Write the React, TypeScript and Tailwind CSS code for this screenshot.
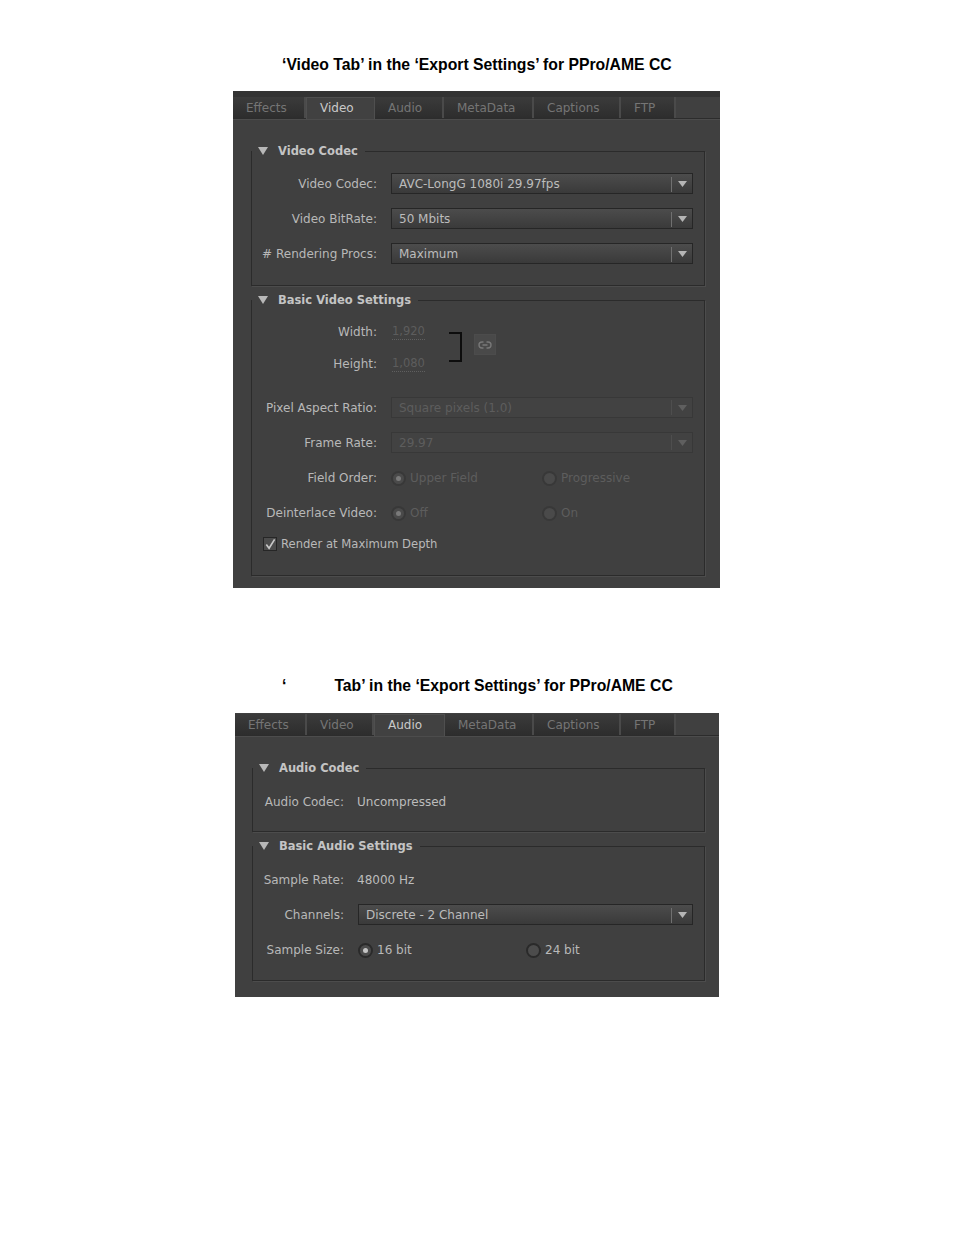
import React from "react";

const FONT = "font-['DejaVu_Sans',sans-serif]";

type Tab = { label: string; width: number };

function Tabs({ tabs, active }: { tabs: Tab[]; active: string }) {
  return (
    <div className="flex h-[22px] items-stretch border-b border-[#2c2c2c] shadow-[0_1px_0_#4c4c4c]">
      {tabs.map((t) => {
        const on = t.label === active;
        return (
          <div
            key={t.label}
            style={{ width: t.width }}
            className={
              on
                ? "flex shrink-0 items-center border-x border-t border-[#4f4f4f] bg-[#414141] pb-[2px] pl-[13px] text-[#c9c9c9] -mb-px"
                : "flex shrink-0 items-center border-r-2 border-[#4a4a4a] bg-gradient-to-b from-[#3b3b3b] to-[#2d2d2d] pl-[13px] text-[#757575]"
            }
          >
            {t.label}
          </div>
        );
      })}
    </div>
  );
}

function Triangle() {
  return (
    <svg width="10" height="8" viewBox="0 0 10 8" className="shrink-0">
      <path d="M0 0H10L5 8Z" fill="#b8b8b8" />
    </svg>
  );
}

function Group({ title, className, children }: { title: string; className: string; children: React.ReactNode }) {
  return (
    <div className={`border border-[#2b2b2b] shadow-[1px_1px_0_#4c4c4c] ${className}`}>
      <div className="-mt-[11px] flex h-[21px] w-fit items-center bg-[#404040] pb-[2px] pl-[6px] pr-[7px]">
        <Triangle />
        <span className="ml-[10px] text-[11.5px] font-bold text-[#c4c4c4]">{title}</span>
      </div>
      {children}
    </div>
  );
}

function Select({ value, disabled, width }: { value: string; disabled?: boolean; width: string }) {
  return (
    <div
      className={`flex h-[21px] items-center border ${width} ${
        disabled
          ? "border-[#383838] bg-[#424242] text-[#5d5d5d]"
          : "border-[#262626] bg-gradient-to-b from-[#4c4c4c] to-[#3a3a3a] pt-px text-[#bcbcbc]"
      }`}
    >
      <span className="flex-1 pl-[7px]">{value}</span>
      <span className={`h-[15px] w-px ${disabled ? "bg-[#4e4e4e]" : "bg-[#707070]"}`} />
      <span className="flex w-[20px] justify-center">
        <svg width="9" height="6" viewBox="0 0 9 6">
          <path d="M0 0H9L4.5 6Z" fill={disabled ? "#5f5f5f" : "#b5b5b5"} />
        </svg>
      </span>
    </div>
  );
}

function Radio({ checked, disabled }: { checked?: boolean; disabled?: boolean }) {
  return (
    <span
      className={`flex h-[15px] w-[15px] shrink-0 items-center justify-center rounded-full border-2 ${
        disabled ? "border-[#383838] bg-[#4a4a4a]" : "border-[#2a2a2a] bg-[#4c4c4c]"
      }`}
    >
      {checked && <span className={`h-[5px] w-[5px] rounded-full ${disabled ? "bg-[#7a7a7a]" : "bg-[#c4c4c4]"}`} />}
    </span>
  );
}

function Row({ label, labelW, gap, className = "", children }: { label: string; labelW: string; gap: string; className?: string; children: React.ReactNode }) {
  return (
    <div className={`flex min-h-5 items-center ${className}`}>
      <span className={`shrink-0 whitespace-nowrap text-right text-[#b8b8b8] ${labelW} ${gap}`}>{label}</span>
      {children}
    </div>
  );
}

function RadioPair({ a, b, on, disabled, firstW }: { a: string; b: string; on?: boolean; disabled?: boolean; firstW: string }) {
  const color = disabled ? "text-[#5d5d5d]" : "text-[#b9b9b9]";
  return (
    <div className="flex items-center">
      <span className={`flex items-center gap-[4px] ${firstW}`}>
        <Radio checked={on} disabled={disabled} />
        <span className={color}>{a}</span>
      </span>
      <span className="flex items-center gap-[4px]">
        <Radio disabled={disabled} />
        <span className={color}>{b}</span>
      </span>
    </div>
  );
}

function Dotted({ children }: { children: string }) {
  return <span className="border-b border-dotted border-[#5f5f5f] text-[11.5px] leading-[15px] text-[#5d5d5d]">{children}</span>;
}

function VideoPanel() {
  const L = "w-[125px]";
  const G = "mr-[14px]";
  return (
    <div className={`ml-[233px] mt-4 w-[487px] bg-[#404040] pb-3 pt-[6px] ${FONT} text-[12px] leading-5 shadow-[inset_0_6px_0_#333333]`}>
      <Tabs
        active="Video"
        tabs={[
          { label: "Effects", width: 73 },
          { label: "Video", width: 69 },
          { label: "Audio", width: 69 },
          { label: "MetaData", width: 90 },
          { label: "Captions", width: 87 },
          { label: "FTP", width: 55 },
        ]}
      />
      <Group title="Video Codec" className="ml-[18px] mr-[15px] mt-[32px] pb-[21px]">
        <div className="mt-[11px] flex flex-col gap-[14px]">
          {[
            ["Video Codec:", "AVC-LongG 1080i 29.97fps"],
            ["Video BitRate:", "50 Mbits"],
            ["# Rendering Procs:", "Maximum"],
          ].map(([l, v]) => (
            <Row key={l} label={l} labelW={L} gap={G}>
              <Select value={v} width="w-[302px]" />
            </Row>
          ))}
        </div>
      </Group>
      <Group title="Basic Video Settings" className="ml-[18px] mr-[15px] mt-[14px] pb-[21px]">
        <div className="mt-[11px] flex items-start">
          <div className="flex w-[197px] flex-col gap-3">
            <Row label="Width:" labelW={L} gap="mr-[15px]">
              <Dotted>1,920</Dotted>
            </Row>
            <Row label="Height:" labelW={L} gap="mr-[15px]">
              <Dotted>1,080</Dotted>
            </Row>
          </div>
          <div className="mt-[10px] h-[30px] w-[13px] border-y-2 border-r-2 border-[#0d0d0d]" />
          <div className="ml-[12px] mt-[12px] flex h-[21px] w-[22px] items-center justify-center border border-[#4c4c4c] bg-[#494949]">
            <svg width="14" height="8" viewBox="0 0 14 8" fill="none" stroke="#787878" strokeWidth="1.4">
              <path d="M5.5 1H4a3 3 0 0 0 0 6h1.5M8.5 1H10a3 3 0 0 1 0 6H8.5M4.5 4h5" />
            </svg>
          </div>
        </div>
        <div className="mt-[23px] flex flex-col gap-[14px]">
          <Row label="Pixel Aspect Ratio:" labelW={L} gap={G}>
            <Select disabled value="Square pixels (1.0)" width="w-[302px]" />
          </Row>
          <Row label="Frame Rate:" labelW={L} gap={G}>
            <Select disabled value="29.97" width="w-[302px]" />
          </Row>
        </div>
        <Row label="Field Order:" labelW={L} gap="mr-[14px]" className="mt-[15px]">
          <RadioPair disabled on a="Upper Field" b="Progressive" firstW="w-[151px]" />
        </Row>
        <Row label="Deinterlace Video:" labelW={L} gap="mr-[14px]" className="mt-[15px]">
          <RadioPair disabled on a="Off" b="On" firstW="w-[151px]" />
        </Row>
        <div className="ml-[11px] mt-[11px] flex h-5 items-center gap-[4px] text-[11.6px] text-[#b9b9b9]">
          <span className="flex h-[14px] w-[14px] items-center justify-center border border-[#262626] bg-[#4c4c4c]">
            <svg width="13" height="13" viewBox="0 0 13 13" fill="none" stroke="#c8c8c8" strokeWidth="1.8">
              <path d="M2.5 6.5 5.5 10.5 11.5 1" />
            </svg>
          </span>
          Render at Maximum Depth
        </div>
      </Group>
    </div>
  );
}

function AudioPanel() {
  const L = "w-[91px]";
  const G = "mr-[13px]";
  return (
    <div className={`ml-[235px] mt-[17px] w-[484px] bg-[#404040] pb-4 pt-px ${FONT} text-[12px] leading-5`}>
      <Tabs
        active="Audio"
        tabs={[
          { label: "Effects", width: 72 },
          { label: "Video", width: 67 },
          { label: "Audio", width: 71 },
          { label: "MetaData", width: 89 },
          { label: "Captions", width: 87 },
          { label: "FTP", width: 55 },
        ]}
      />
      <Group title="Audio Codec" className="ml-[17px] mr-[14px] mt-[32px] pb-[19px]">
        <Row label="Audio Codec:" labelW={L} gap={G} className="mt-[13px]">
          <span className="text-[#bcbcbc]">Uncompressed</span>
        </Row>
      </Group>
      <Group title="Basic Audio Settings" className="ml-[17px] mr-[14px] mt-[14px] pb-[20px]">
        <Row label="Sample Rate:" labelW={L} gap={G} className="mt-[13px]">
          <span className="text-[#bcbcbc]">48000 Hz</span>
        </Row>
        <Row label="Channels:" labelW={L} gap="mr-[14px]" className="mt-[14px]">
          <Select value="Discrete - 2 Channel" width="w-[335px]" />
        </Row>
        <Row label="Sample Size:" labelW={L} gap="mr-[14px]" className="mt-[15px]">
          <RadioPair on a="16 bit" b="24 bit" firstW="w-[168px]" />
        </Row>
      </Group>
    </div>
  );
}

export default function App() {
  const title = "font-['Liberation_Sans',Arial,sans-serif] text-[15.75px] font-bold leading-5 text-black";
  return (
    <div className="h-[1235px] w-[954px] overflow-hidden bg-white pt-[55px]">
      <div className={`pl-[282px] ${title}`}>‘Video Tab’ in the ‘Export Settings’ for PPro/AME CC</div>
      <VideoPanel />
      <div className={`mt-[88px] pl-[282px] ${title}`}>
        ‘<span className="ml-[48px]">Tab’ in the ‘Export Settings’ for PPro/AME CC</span>
      </div>
      <AudioPanel />
    </div>
  );
}
